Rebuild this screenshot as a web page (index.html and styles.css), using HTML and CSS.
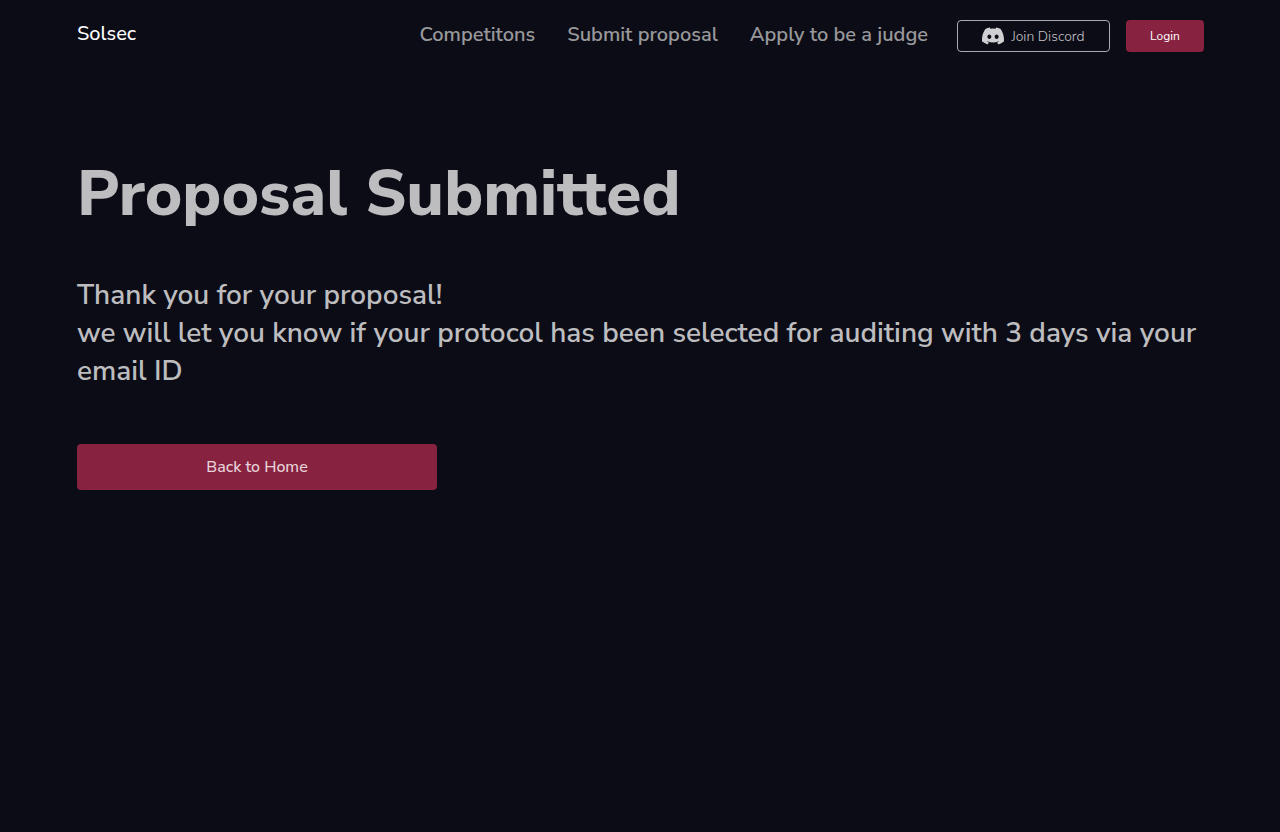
FILE: index.html
```html
<!DOCTYPE html>
<html lang="en">
<head>
<meta charset="utf-8">
<meta name="viewport" content="width=device-width, initial-scale=1">
<title>Solsec</title>
<link rel="stylesheet" href="styles.css">
</head>
<body>
<header class="header">
  <a class="brand" href="#">Solsec</a>
  <nav class="nav">
    <a class="nav-link" href="#">Competitons</a>
    <a class="nav-link" href="#">Submit proposal</a>
    <a class="nav-link" href="#">Apply to be a judge</a>
  </nav>
  <div class="actions">
    <button class="discord" type="button">
      <svg class="discord-icon" viewBox="0 0 24 24" aria-hidden="true"><path fill="currentColor" d="M20.317 4.37a19.8 19.8 0 0 0-4.885-1.515.074.074 0 0 0-.079.037c-.21.375-.444.864-.608 1.25a18.27 18.27 0 0 0-5.487 0 12.64 12.64 0 0 0-.617-1.25.077.077 0 0 0-.079-.037A19.736 19.736 0 0 0 3.677 4.37a.07.07 0 0 0-.032.027C.533 9.046-.32 13.58.099 18.057a.082.082 0 0 0 .031.057 19.9 19.9 0 0 0 5.993 3.03.078.078 0 0 0 .084-.028 14.09 14.09 0 0 0 1.226-1.994.076.076 0 0 0-.041-.106 13.107 13.107 0 0 1-1.872-.892.077.077 0 0 1-.008-.128c.126-.094.252-.192.372-.292a.074.074 0 0 1 .077-.01c3.928 1.793 8.18 1.793 12.062 0a.074.074 0 0 1 .078.01c.12.098.246.198.373.292a.077.077 0 0 1-.006.127 12.299 12.299 0 0 1-1.873.892.077.077 0 0 0-.041.107c.36.698.772 1.362 1.225 1.993a.076.076 0 0 0 .084.028 19.839 19.839 0 0 0 6.002-3.03.077.077 0 0 0 .032-.054c.5-5.177-.838-9.674-3.549-13.66a.061.061 0 0 0-.031-.03zM8.02 15.33c-1.183 0-2.157-1.085-2.157-2.419 0-1.333.956-2.419 2.157-2.419 1.21 0 2.176 1.096 2.157 2.42 0 1.333-.956 2.418-2.157 2.418zm7.975 0c-1.183 0-2.157-1.085-2.157-2.419 0-1.333.955-2.419 2.157-2.419 1.21 0 2.176 1.096 2.157 2.42 0 1.333-.946 2.418-2.157 2.418z"/></svg>
      Join Discord
    </button>
    <button class="login" type="button">Login</button>
  </div>
</header>
<main class="content">
  <h1 class="title">Proposal Submitted</h1>
  <p class="message">Thank you for your proposal!<br>we will let you know if your protocol has been selected for auditing with 3 days via your email ID</p>
  <button class="home" type="button">Back to Home</button>
</main>
</body>
</html>
```

FILE: styles.css
```css
* { box-sizing: border-box; }
body {
  margin: 0;
  min-height: 100vh;
  background: #0c0c17;
  color: #bdbdbf;
  font-family: "Nunito Sans", Nunito, Lato, "Open Sans", sans-serif;
}
a { text-decoration: none; }
button { font-family: inherit; border-radius: 4px; cursor: pointer; }
.header {
  display: flex;
  align-items: flex-start;
  padding: 20px 76px 0 77px;
}
.brand { color: #fff; font-size: 20px; line-height: 28px; font-weight: 500; }
.nav { display: flex; gap: 32px; margin-left: auto; }
.nav-link { color: #98989b; font-size: 20px; line-height: 30px; font-weight: 600; white-space: nowrap; }
.actions { display: flex; gap: 16px; margin-left: 29px; }
.discord {
  display: flex;
  align-items: center;
  justify-content: center;
  gap: 7px;
  width: 153px;
  height: 32px;
  padding: 0;
  border: 1px solid #a9a9ae;
  background: transparent;
  color: #c4c4c7;
  font-size: 14px;
  font-weight: 300;
}
.discord-icon { width: 22px; height: 22px; color: #d0d0d2; }
.login {
  width: 78px;
  height: 32px;
  padding: 0;
  border: 0;
  background: #872341;
  color: #fff;
  font-size: 12px;
}
.content { padding: 98px 76px 40px 77px; }
.title { margin: 0; font-size: 64px; line-height: 88px; font-weight: 800; }
.message { margin: 38px 0 0; font-size: 28px; line-height: 38px; font-weight: 600; }
.home {
  display: block;
  width: 360px;
  max-width: 100%;
  height: 46px;
  margin-top: 54px;
  border: 0;
  background: #872341;
  color: #e7d3d9;
  font-size: 16px;
  font-weight: 500;
}
```
